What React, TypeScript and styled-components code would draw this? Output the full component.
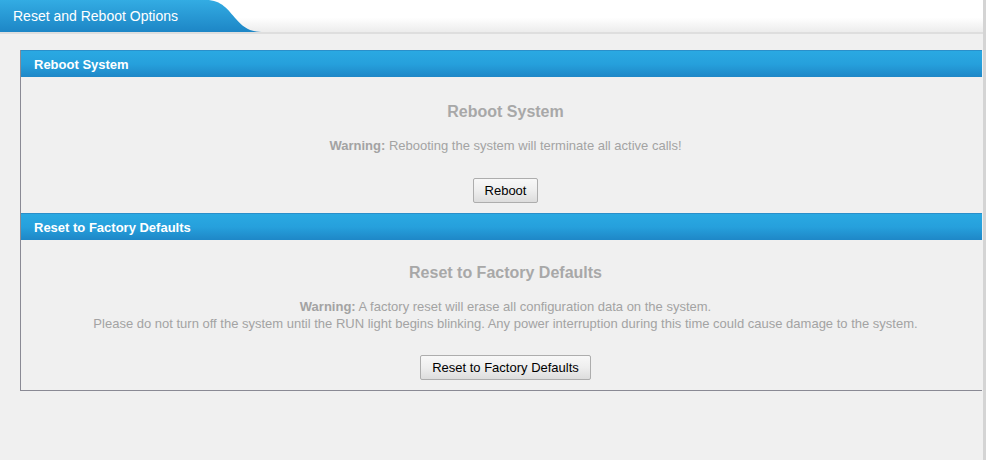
import styled, { createGlobalStyle } from 'styled-components';

const GlobalStyle = createGlobalStyle`
  html, body {
    margin: 0;
    padding: 0;
    background: #f0f0f0;
    font-family: "Liberation Sans", Arial, sans-serif;
  }
`;

const PageStyled = styled.div`
  width: 986px;
  height: 460px;
  background: #f0f0f0;
  box-sizing: border-box;
  border-right: 3px solid #d4d4d4;
`;

const TopBarStyled = styled.div`
  height: 32px;
  background: linear-gradient(to bottom, #ffffff 0%, #ffffff 55%, #ececec 100%);
  border-bottom: 2px solid #dedede;
  display: flex;
`;

const TabStyled = styled.div`
  position: relative;
  width: 264px;
  height: 32px;
  display: flex;
  align-items: center;
  padding-left: 13px;
  box-sizing: border-box;
`;

const TabShape = styled.svg`
  position: absolute;
  left: 0;
  top: 0;
`;

const TabLabel = styled.span`
  position: relative;
  color: #ffffff;
  font-size: 14px;
  padding-bottom: 1px;
`;

const ContentStyled = styled.div`
  padding: 16px 1px 0 20px;
`;

const PanelStyled = styled.div`
  border-left: 1px solid #8a8a94;
  border-bottom: 1px solid #8a8a94;
`;

const SectionHeader = styled.div`
  height: 27px;
  display: flex;
  align-items: center;
  padding-left: 13px;
  background: linear-gradient(to bottom, #2aa9e2 0%, #26a0dc 50%, #1e87c7 100%);
  border-top: 1px solid #2a8fca;
  box-sizing: border-box;
  color: #ffffff;
  font-size: 13px;
  font-weight: bold;
`;

const SectionBody = styled.div<{ $top: number; $bottom: number }>`
  display: flex;
  flex-direction: column;
  align-items: center;
  padding: ${(p) => p.$top}px 0 ${(p) => p.$bottom}px 8px;
  color: #a3a3a3;
`;

const Heading = styled.div`
  font-size: 16px;
  font-weight: bold;
  line-height: 20px;
  color: #a8a8a8;
`;

const Notice = styled.div<{ $gap: number }>`
  margin-top: ${(p) => p.$gap}px;
  font-size: 13px;
  line-height: 17px;
  text-align: center;

  b {
    font-weight: bold;
  }
`;

const ActionButton = styled.button<{ $gap: number }>`
  margin-top: ${(p) => p.$gap}px;
  height: 25px;
  box-sizing: border-box;
  padding: 0 11px;
  font-family: "Liberation Sans", Arial, sans-serif;
  font-size: 13px;
  color: #000000;
  background: linear-gradient(to bottom, #f8f8f8 0%, #eeeeee 50%, #dddddd 100%);
  border: 1px solid #adadad;
  border-radius: 2px;
  cursor: pointer;
`;

const App = () => {
  return (
    <>
      <GlobalStyle />
      <PageStyled>
        <TopBarStyled>
          <TabStyled>
            <TabShape width="264" height="32" viewBox="0 0 264 32">
              <defs>
                <linearGradient id="tabFill" x1="0" y1="0" x2="0" y2="1">
                  <stop offset="0" stopColor="#33ace3" />
                  <stop offset="1" stopColor="#1d86c6" />
                </linearGradient>
              </defs>
              <path
                d="M0 0 H206 C222 0 228 10 236 19 C244 28 250 32 264 32 H0 Z"
                fill="url(#tabFill)"
              />
            </TabShape>
            <TabLabel>Reset and Reboot Options</TabLabel>
          </TabStyled>
        </TopBarStyled>
        <ContentStyled>
          <PanelStyled>
            <SectionHeader>Reboot System</SectionHeader>
            <SectionBody $top={25} $bottom={10}>
              <Heading>Reboot System</Heading>
              <Notice $gap={15}>
                <b>Warning:</b> Rebooting the system will terminate all active calls!
              </Notice>
              <ActionButton $gap={24}>Reboot</ActionButton>
            </SectionBody>
            <SectionHeader>Reset to Factory Defaults</SectionHeader>
            <SectionBody $top={23} $bottom={10}>
              <Heading>Reset to Factory Defaults</Heading>
              <Notice $gap={15}>
                <b>Warning:</b> A factory reset will erase all configuration data on the system.
                <br />
                Please do not turn off the system until the RUN light begins blinking. Any power
                interruption during this time could cause damage to the system.
              </Notice>
              <ActionButton $gap={23}>Reset to Factory Defaults</ActionButton>
            </SectionBody>
          </PanelStyled>
        </ContentStyled>
      </PageStyled>
    </>
  );
};

export default App;
